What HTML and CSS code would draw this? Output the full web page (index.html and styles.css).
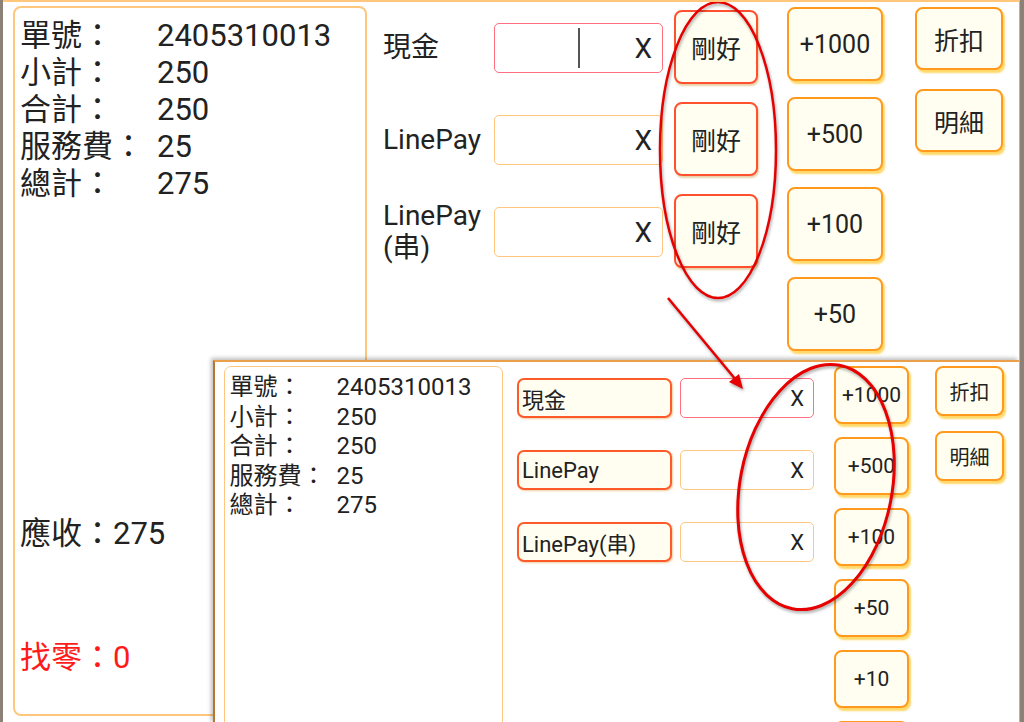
FILE: index.html
```html
<!DOCTYPE html>
<html lang="zh-Hant">
<head>
    <meta charset="UTF-8">
    <meta name="viewport" content="width=device-width, initial-scale=1.0">
    <title>結帳</title>
    <link rel="stylesheet" href="styles.css">
</head>
<body>

<div class="screen">
    <div class="bill">
        <div class="info">
            <span>單號：</span><span>2405310013</span>
            <span>小計：</span><span>250</span>
            <span>合計：</span><span>250</span>
            <span>服務費：</span><span>25</span>
            <span>總計：</span><span>275</span>
        </div>
        <div class="due">應收：275</div>
        <div class="change">找零：0</div>
    </div>

    <div class="pay">
        <div class="pay-rows">
            <div class="pay-row">
                <div class="pay-label">現金</div>
                <div class="pay-input focus"><span class="caret"></span>X</div>
            </div>
            <div class="pay-row">
                <div class="pay-label">LinePay</div>
                <div class="pay-input">X</div>
            </div>
            <div class="pay-row">
                <div class="pay-label">LinePay<br>(串)</div>
                <div class="pay-input">X</div>
            </div>
        </div>
        <div class="btn-col exact">
            <button>剛好</button>
            <button>剛好</button>
            <button>剛好</button>
        </div>
        <div class="btn-col add">
            <button>+1000</button>
            <button>+500</button>
            <button>+100</button>
            <button>+50</button>
        </div>
        <div class="btn-col extra">
            <button>折扣</button>
            <button>明細</button>
        </div>
    </div>

    <!-- 新版畫面 -->
    <div class="inset">
        <div class="bill small">
            <div class="info">
                <span>單號：</span><span>2405310013</span>
                <span>小計：</span><span>250</span>
                <span>合計：</span><span>250</span>
                <span>服務費：</span><span>25</span>
                <span>總計：</span><span>275</span>
            </div>
        </div>
        <div class="pay-rows small">
            <div class="pay-row">
                <button class="pay-name">現金</button>
                <div class="pay-input focus">X</div>
            </div>
            <div class="pay-row">
                <button class="pay-name">LinePay</button>
                <div class="pay-input">X</div>
            </div>
            <div class="pay-row">
                <button class="pay-name">LinePay(串)</button>
                <div class="pay-input">X</div>
            </div>
        </div>
        <div class="btn-col add small">
            <button>+1000</button>
            <button>+500</button>
            <button>+100</button>
            <button>+50</button>
            <button>+10</button>
            <button></button>
        </div>
        <div class="btn-col extra small">
            <button>折扣</button>
            <button>明細</button>
        </div>
    </div>

    <svg class="marks" width="1024" height="722" viewBox="0 0 1024 722">
        <ellipse cx="718" cy="150" rx="58" ry="148" fill="none" stroke="#e60000" stroke-width="2.5"/>
        <line x1="668" y1="298" x2="736" y2="380" stroke="#e60000" stroke-width="2.5"/>
        <polygon points="743,389 729,382 739,374" fill="#e60000"/>
        <ellipse cx="816" cy="487" rx="76" ry="124" transform="rotate(11 816 487)" fill="none" stroke="#e60000" stroke-width="3"/>
    </svg>
</div>

</body>
</html>
```

FILE: styles.css
```css
* {
    box-sizing: border-box;
}
body {
    margin: 0;
    background: #8b8177;
    font-family: Roboto, "Noto Sans CJK TC", sans-serif;
    color: #222;
}
.screen {
    position: relative;
    width: 1017px;
    height: 722px;
    margin-left: 3px;
    background: #fff;
    border-top: 2px solid #ffc67c;
    border-right: 1px solid #f5a84a;
    display: flex;
    overflow: hidden;
}
button {
    font-family: inherit;
    color: #222;
    padding: 0;
    background: #fffef0;
    border: 2px solid #ff9a1e;
    border-radius: 8px;
    box-shadow: 2px 3px 2px rgba(255, 200, 40, 0.7);
}

/* 左邊帳單 */
.bill {
    width: 354px;
    margin: 4px 0 6px 10px;
    border: 2px solid #ffc77d;
    border-radius: 8px;
    padding: 8.5px 5px;
}
.info {
    display: grid;
    grid-template-columns: 137px auto;
    font-size: 31px;
    line-height: 37px;
}
.due {
    margin-top: 313px;
    font-size: 31px;
    line-height: 37px;
}
.change {
    margin-top: 87px;
    font-size: 31px;
    line-height: 37px;
    color: #ff1a1a;
}

/* 付款 */
.pay {
    display: flex;
    align-items: flex-start;
}
.pay-rows {
    display: flex;
    flex-direction: column;
    gap: 18px;
    margin: 9px 0 0 16px;
}
.pay-row {
    display: flex;
    align-items: center;
    height: 74px;
}
.pay-label {
    width: 111px;
    font-size: 28px;
    line-height: 32px;
}
.pay-input {
    position: relative;
    width: 169px;
    height: 50px;
    border: 1.5px solid #ffc77d;
    border-radius: 5px;
    display: flex;
    align-items: center;
    justify-content: flex-end;
    padding-right: 10px;
    font-size: 28px;
}
.pay-input.focus {
    border-color: #ff6f7f;
}
.caret {
    position: absolute;
    left: 83px;
    top: 4px;
    width: 2px;
    height: 40px;
    background: #555;
}
.btn-col {
    display: flex;
    flex-direction: column;
}
.btn-col button {
    font-size: 25px;
}
.exact {
    margin: 8px 0 0 11px;
    gap: 18px;
}
.exact button {
    width: 84px;
    height: 74px;
    border-color: #ff5030;
    box-shadow: 1px 2px 2px rgba(200, 150, 60, 0.45);
}
.add {
    margin: 5px 0 0 29px;
    gap: 16px;
}
.add button {
    width: 96px;
    height: 74px;
}
.extra {
    margin: 5px 0 0 32px;
    gap: 19px;
}
.extra button {
    width: 88px;
    height: 63px;
}

/* 新版畫面 (疊在上面) */
.inset {
    position: absolute;
    left: 210px;
    top: 358px;
    width: 806px;
    height: 364px;
    background: #fff;
    border-top: 2px solid #eaa04a;
    border-left: 2px solid #b7752f;
    box-shadow: -2px -2px 4px rgba(0, 0, 0, 0.25);
    display: flex;
    align-items: flex-start;
    overflow: hidden;
}
.bill.small {
    width: 279px;
    height: 400px;
    margin: 4px 0 0 9px;
    border-width: 1.5px;
    border-radius: 7px;
    padding: 6px 4.5px;
}
.bill.small .info {
    grid-template-columns: 107px auto;
    font-size: 24px;
    line-height: 29.5px;
}
.pay-rows.small {
    margin: 16px 0 0 14px;
    gap: 32px;
}
.pay-rows.small .pay-row {
    height: 40px;
}
.pay-name {
    width: 155px;
    height: 40px;
    border-color: #ff5a2a;
    border-radius: 7px;
    font-size: 22px;
    text-align: left;
    padding-left: 3px;
    box-shadow: 1px 1px 2px rgba(220, 160, 60, 0.5);
}
.pay-rows.small .pay-input {
    width: 134px;
    height: 40px;
    margin-left: 8px;
    font-size: 22px;
    padding-right: 9px;
}
.add.small {
    margin: 4px 0 0 20px;
    gap: 13px;
}
.add.small button {
    width: 75px;
    height: 58px;
    font-size: 21px;
}
.extra.small {
    margin: 4px 0 0 26px;
    gap: 15px;
}
.extra.small button {
    width: 69px;
    height: 50px;
    font-size: 20px;
}

/* 紅色標記 */
.marks {
    position: absolute;
    left: -3px;
    top: -2px;
    filter: drop-shadow(1px 2px 1.5px rgba(0, 0, 0, 0.35));
    pointer-events: none;
}
```
